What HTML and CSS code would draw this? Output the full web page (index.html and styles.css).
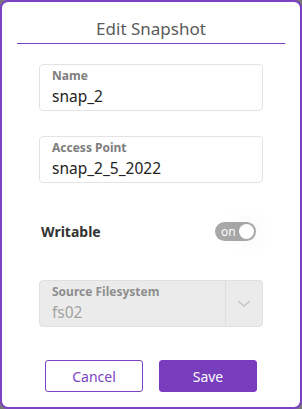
FILE: index.html
```html
<!DOCTYPE html>
<html lang="en">
<head>
    <meta charset="UTF-8">
    <meta name="viewport" content="width=device-width, initial-scale=1.0">
    <title>Edit Snapshot</title>
    <link rel="stylesheet" href="styles.css">
</head>
<body>

    <div class="dialog">
        <h1 class="dialog-title">Edit Snapshot</h1>

        <div class="form">
            <div class="field field-name">
                <label for="snapName">Name</label>
                <input type="text" id="snapName" value="snap_2">
            </div>

            <div class="field field-access">
                <label for="accessPoint">Access Point</label>
                <input type="text" id="accessPoint" value="snap_2_5_2022">
            </div>

            <div class="toggle-row">
                <span class="toggle-label">Writable</span>
                <span class="toggle">
                    <span class="toggle-text">on</span>
                    <span class="toggle-knob"></span>
                </span>
            </div>

            <div class="field select disabled">
                <div class="select-value">
                    <label>Source Filesystem</label>
                    <span class="value">fs02</span>
                </div>
                <div class="select-arrow">
                    <svg width="14" height="8" viewBox="0 0 14 8">
                        <path d="M1.5 1.5 L7 6 L12.5 1.5" fill="none" stroke="#c4c4c4" stroke-width="1.6" stroke-linecap="round" stroke-linejoin="round"/>
                    </svg>
                </div>
            </div>

            <div class="buttons">
                <button class="btn btn-outline">Cancel</button>
                <button class="btn btn-primary">Save</button>
            </div>
        </div>
    </div>

</body>
</html>
```

FILE: styles.css
```css
html, body {
    margin: 0;
    padding: 0;
    background-color: #777;
}
body {
    font-family: "Noto Sans", "Open Sans", sans-serif;
    width: 302px;
    height: 409px;
}
.dialog {
    box-sizing: border-box;
    width: 302px;
    height: 409px;
    background-color: #fff;
    border: 2px solid #7b42c2;
    border-radius: 8px;
    padding: 0 15px;
}
.dialog-title {
    margin: 0;
    padding-top: 16px;
    height: 25px;
    font-size: 17px;
    font-weight: normal;
    line-height: 22px;
    color: #5a5a5a;
    text-align: center;
    border-bottom: 1px solid #7b42c2;
}
.form {
    padding: 0 22px;
}
.field {
    box-sizing: border-box;
    height: 47px;
    border: 1px solid #e3e3e3;
    border-radius: 4px;
    padding: 3px 12px 0;
}
.field-name {
    margin-top: 20px;
}
.field-access {
    margin-top: 25px;
}
.field label {
    display: block;
    font-size: 12px;
    font-weight: bold;
    line-height: 16px;
    color: #7d7d7d;
}
.field input {
    display: block;
    width: 100%;
    border: none;
    outline: none;
    padding: 0;
    margin: 1px 0 0;
    font-family: inherit;
    font-size: 15.5px;
    line-height: 22px;
    height: 22px;
    color: #222;
    background: transparent;
}
.toggle-row {
    display: flex;
    align-items: center;
    justify-content: space-between;
    margin-top: 38px;
    padding: 0 7px 0 2px;
    height: 20px;
}
.toggle-label {
    font-size: 14px;
    font-weight: bold;
    color: #333;
}
.toggle {
    position: relative;
    box-sizing: border-box;
    display: flex;
    align-items: center;
    width: 41px;
    height: 19px;
    border-radius: 10px;
    background-color: #a9a9a9;
    padding: 0 2px 0 6px;
}
.toggle-text {
    flex: 1;
    font-size: 12px;
    line-height: 19px;
    color: #fff;
}
.toggle-knob {
    width: 15px;
    height: 15px;
    border-radius: 50%;
    background-color: #fff;
    box-shadow: 0 0 18px 10px rgba(0, 0, 0, 0.025);
}
.select {
    display: flex;
    margin-top: 39px;
    padding: 0;
    background-color: #ebebeb;
    border-color: #e0e0e0;
}
.select-value {
    flex: 1;
    padding: 3px 12px 0;
}
.select.disabled label {
    color: #8e8e8e;
}
.select .value {
    display: block;
    margin-top: 1px;
    font-size: 15.5px;
    line-height: 22px;
    color: #a3a3a3;
}
.select-arrow {
    width: 36px;
    border-left: 1px solid #dedede;
    display: flex;
    align-items: center;
    justify-content: center;
}
.buttons {
    display: flex;
    justify-content: space-between;
    margin-top: 33px;
    padding: 0 6px;
}
.btn {
    box-sizing: border-box;
    width: 98px;
    height: 32px;
    border-radius: 3px;
    font-family: inherit;
    font-size: 14px;
    cursor: pointer;
}
.btn-outline {
    background-color: #fff;
    border: 1px solid #7b42c2;
    color: #7b42c2;
}
.btn-primary {
    background-color: #773dbd;
    border: 1px solid #773dbd;
    color: #fff;
}
```
